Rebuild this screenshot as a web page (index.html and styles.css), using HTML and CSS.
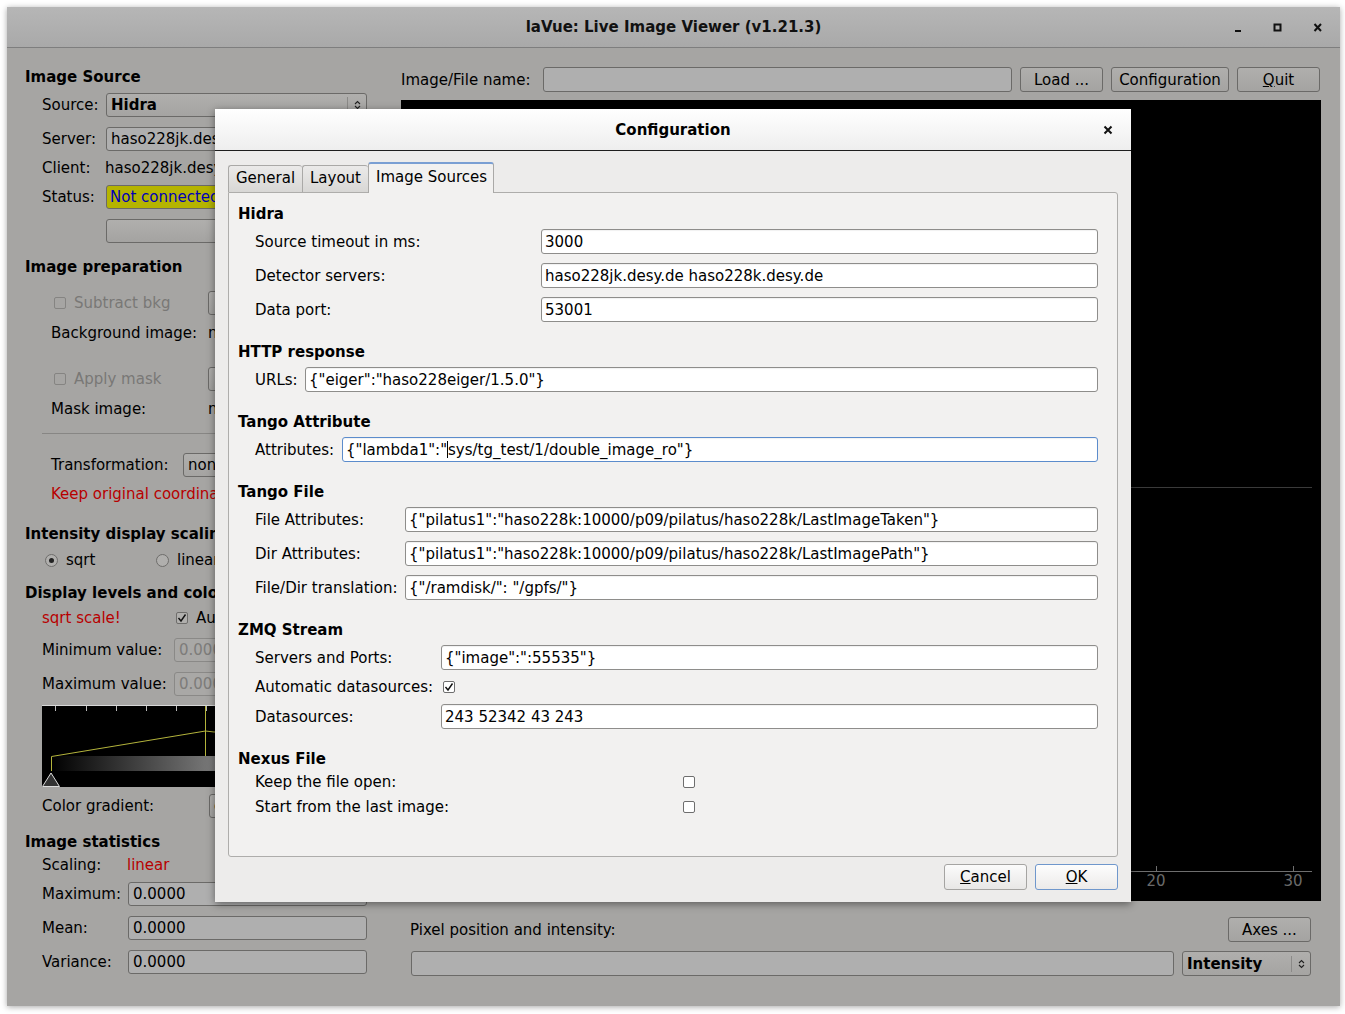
FILE: index.html
```html
<!DOCTYPE html>
<html>
<head>
<meta charset="utf-8">
<title>laVue: Live Image Viewer</title>
<link rel="stylesheet" href="styles.css">
</head>
<body>
<div class="win">
  <div class="titlebar">
    <span></span>
    <span class="wtitle">laVue: Live Image Viewer (v1.21.3)</span>
    <div class="wctl">
      <svg width="20" height="12" viewBox="0 0 20 12"><rect x="7" y="8" width="6" height="2" fill="#111"/></svg>
      <svg width="20" height="12" viewBox="0 0 20 12"><rect x="6.5" y="2.5" width="6" height="6" fill="none" stroke="#111" stroke-width="2"/></svg>
      <svg width="20" height="12" viewBox="0 0 20 12"><path d="M6.5 2 L13 9 M13 2 L6.5 9" stroke="#111" stroke-width="2" fill="none"/></svg>
    </div>
  </div>

  <div class="main">
    <div class="left">
      <div class="row head">Image Source</div>
      <div class="row ind mt4"><span class="lab w64">Source:</span><div class="combo grow"><span class="ctext b">Hidra</span><span class="arr"><svg width="7" height="10" viewBox="0 0 7 10"><path d="M1 4 L3.5 1.5 L6 4 M1 6 L3.5 8.5 L6 6" fill="none" stroke="#222" stroke-width="1.1"/></svg></span></div></div>
      <div class="row ind mt10"><span class="lab w64">Server:</span><div class="mfield grow">haso228jk.desy.de</div></div>
      <div class="row ind mt5"><span class="lab w63">Client:</span><span>haso228jk.desy.de</span></div>
      <div class="row ind mt5"><span class="lab w64">Status:</span><div class="status grow">Not connected</div></div>
      <div class="row ind mt10"><span class="lab w64"></span><div class="mbtn grow">Start</div></div>

      <div class="row head mt12">Image preparation</div>
      <div class="row ind29 mt12"><span class="cbl w154"><span class="mcb dis"></span><span class="dtext">Subtract bkg</span></span><div class="mbtn grow">Select ...</div></div>
      <div class="row ind26 mt6"><span class="lab w157">Background image:</span><span>none</span></div>
      <div class="row ind29 mt22"><span class="cbl w154"><span class="mcb dis"></span><span class="dtext">Apply mask</span></span><div class="mbtn grow">Select ...</div></div>
      <div class="row ind26 mt6"><span class="lab w157">Mask image:</span><span>none</span></div>
      <div class="sep mt12"></div>
      <div class="row ind26 mt19"><span class="lab w132">Transformation:</span><div class="combo grow"><span class="ctext">none</span><span class="arr"><svg width="7" height="10" viewBox="0 0 7 10"><path d="M1 4 L3.5 1.5 L6 4 M1 6 L3.5 8.5 L6 6" fill="none" stroke="#222" stroke-width="1.1"/></svg></span></div></div>
      <div class="row ind26 mt5 red">Keep original coordinates</div>

      <div class="row head mt16">Intensity display scaling</div>
      <div class="row ind20 mt2"><span class="rad w111"><span class="mrb on"></span>sqrt</span><span class="rad w111"><span class="mrb"></span>linear</span><span class="rad"><span class="mrb"></span>log</span></div>

      <div class="row head mt9">Display levels and colors</div>
      <div class="row ind mt1"><span class="lab w134 red">sqrt scale!</span><span class="cbl"><span class="mcb chk"><svg width="10" height="10" viewBox="0 0 10 10"><path d="M1.5 5 L4 8 L8.5 1.5" fill="none" stroke="#111" stroke-width="1.4"/></svg></span>Auto levels</span></div>
      <div class="row ind mt8"><span class="lab w132">Minimum value:</span><div class="mfield dis grow">0.0000</div></div>
      <div class="row ind mt10"><span class="lab w132">Maximum value:</span><div class="mfield dis grow">0.0000</div></div>
      <div class="hist mt9">
        <svg width="325" height="82" viewBox="0 0 325 82">
          <defs><linearGradient id="gbar" x1="0" x2="1" y1="0" y2="0"><stop offset="0" stop-color="#000"/><stop offset="1" stop-color="#e6e6e6"/></linearGradient></defs>
          <rect width="325" height="82" fill="#000"/>
          <line x1="0" y1="0.5" x2="325" y2="0.5" stroke="#d8d8d8"/>
          <path d="M13.5 1 V6 M44.5 1 V6 M74.5 1 V6 M104.5 1 V6 M134.5 1 V6 M164.5 1 V6 M194.5 1 V6 M224.5 1 V6 M254.5 1 V6 M284.5 1 V6 M314.5 1 V6" stroke="#bbb"/>
          <rect x="9" y="51" width="306" height="15" fill="url(#gbar)"/>
          <path d="M9.5 66 V51.5 L163.5 26 L172 27 L315 22" fill="none" stroke="#b4b43c"/>
          <path d="M163.5 1 V51" stroke="#b4b43c"/>
          <path d="M0.5 81.5 L9 68 L17.5 81.5 Z" fill="#333" stroke="#ddd"/>
        </svg>
      </div>
      <div class="row ind mt7"><span class="lab w167">Color gradient:</span><div class="combo grow"><span class="ctext">grey</span><span class="arr"><svg width="7" height="10" viewBox="0 0 7 10"><path d="M1 4 L3.5 1.5 L6 4 M1 6 L3.5 8.5 L6 6" fill="none" stroke="#222" stroke-width="1.1"/></svg></span></div></div>

      <div class="row head mt12">Image statistics</div>
      <div class="row ind h22"><span class="lab w85">Scaling:</span><span class="red">linear</span></div>
      <div class="row ind mt6"><span class="lab w86">Maximum:</span><div class="mfield grow">0.0000</div></div>
      <div class="row ind mt10"><span class="lab w86">Mean:</span><div class="mfield grow">0.0000</div></div>
      <div class="row ind mt10"><span class="lab w86">Variance:</span><div class="mfield grow">0.0000</div></div>
    </div>

    <div class="right">
      <div class="toprow">
        <span class="lab w142">Image/File name:</span>
        <div class="mfield w469"></div>
        <div class="mbtn w83">Load ...</div>
        <div class="mbtn w118">Configuration</div>
        <div class="mbtn w83"><u>Q</u>uit</div>
      </div>
      <div class="image">
        <svg width="920" height="801" viewBox="0 0 920 801">
          <rect width="920" height="801" fill="#000"/>
          <line x1="100" y1="387.5" x2="911" y2="387.5" stroke="#3a3a3a"/>
          <line x1="0" y1="771.5" x2="911" y2="771.5" stroke="#6e6e6e"/>
          <path d="M755.5 766 V771 M892.5 766 V771" stroke="#6e6e6e"/>
          <text x="755" y="786" class="axl" text-anchor="middle">20</text>
          <text x="892" y="786" class="axl" text-anchor="middle">30</text>
        </svg>
      </div>
      <div class="pixrow">
        <span class="grow">Pixel position and intensity:</span>
        <div class="mbtn w83">Axes ...</div>
      </div>
      <div class="pixrow2">
        <div class="mfield grow"></div>
        <div class="combo w129"><span class="ctext b">Intensity</span><span class="arr"><svg width="7" height="10" viewBox="0 0 7 10"><path d="M1 4 L3.5 1.5 L6 4 M1 6 L3.5 8.5 L6 6" fill="none" stroke="#222" stroke-width="1.1"/></svg></span></div>
      </div>
    </div>
  </div>

  <div class="dialog">
    <div class="dtitle">
      <span></span>
      <span class="dtt">Configuration</span>
      <div class="dctl"><svg width="10" height="10" viewBox="0 0 10 10"><path d="M1.5 1.5 L8.5 8.5 M8.5 1.5 L1.5 8.5" stroke="#111" stroke-width="2" fill="none"/></svg></div>
    </div>
    <div class="dbody">
      <div class="tabs">
        <div class="tab w74">General</div>
        <div class="tab w66">Layout</div>
        <div class="tab active w126">Image Sources</div>
      </div>
      <div class="pane">
        <div class="gh">Hidra</div>
        <div class="grid c286">
          <span class="gl">Source timeout in ms:</span><div class="le">3000</div>
          <span class="gl">Detector servers:</span><div class="le">haso228jk.desy.de haso228k.desy.de</div>
          <span class="gl">Data port:</span><div class="le">53001</div>
        </div>

        <div class="gh mt19">HTTP response</div>
        <div class="grid c50">
          <span class="gl">URLs:</span><div class="le">{"eiger":"haso228eiger/1.5.0"}</div>
        </div>

        <div class="gh mt19">Tango Attribute</div>
        <div class="grid c87">
          <span class="gl">Attributes:</span><div class="le focus">{"lambda1":"<span class="caret"></span>sys/tg_test/1/double_image_ro"}</div>
        </div>

        <div class="gh mt19">Tango File</div>
        <div class="grid c150">
          <span class="gl">File Attributes:</span><div class="le">{"pilatus1":"haso228k:10000/p09/pilatus/haso228k/LastImageTaken"}</div>
          <span class="gl">Dir Attributes:</span><div class="le">{"pilatus1":"haso228k:10000/p09/pilatus/haso228k/LastImagePath"}</div>
          <span class="gl">File/Dir translation:</span><div class="le">{"/ramdisk/": "/gpfs/"}</div>
        </div>

        <div class="gh mt19">ZMQ Stream</div>
        <div class="grid c186">
          <span class="gl">Servers and Ports:</span><div class="le">{"image":":55535"}</div>
          <span class="gl">Automatic datasources:</span><div class="cbcell"><span class="dcb chk"><svg width="10" height="10" viewBox="0 0 10 10"><path d="M1.5 5 L4 8 L8.5 1.5" fill="none" stroke="#111" stroke-width="1.4"/></svg></span></div>
          <span class="gl">Datasources:</span><div class="le">243 52342 43 243</div>
        </div>

        <div class="gh mt19">Nexus File</div>
        <div class="grid nx c428">
          <span class="gl">Keep the file open:</span><div class="cbcell"><span class="dcb"></span></div>
          <span class="gl">Start from the last image:</span><div class="cbcell"><span class="dcb"></span></div>
        </div>
      </div>
      <div class="btns">
        <div class="dbtn"><u>C</u>ancel</div>
        <div class="dbtn def"><u>O</u>K</div>
      </div>
    </div>
  </div>
</div>
</body>
</html>
```

FILE: styles.css
```css
* { box-sizing: border-box; }
html, body { margin: 0; padding: 0; }
body {
  width: 1345px;
  height: 1014px;
  overflow: hidden;
  background: #ffffff;
  font-family: "DejaVu Sans", "Noto Sans", sans-serif;
  font-size: 15px;
  color: #000;
}

.win {
  position: relative;
  margin: 7px 0 0 7px;
  width: 1333px;
  height: 999px;
  background: #a6a5a3;
  box-shadow: 0 1px 6px rgba(0,0,0,0.35);
}

.titlebar {
  height: 41px;
  display: grid;
  grid-template-columns: 1fr auto 1fr;
  align-items: center;
  background: linear-gradient(#b6b6b6, #a9a9a9);
  border-bottom: 1px solid #7e7e7e;
}
.wtitle { font-weight: bold; color: #111; }
.wctl {
  display: flex;
  justify-content: flex-end;
  gap: 20px;
  padding-right: 12px;
  padding-top: 2px;
}

.main {
  display: flex;
  gap: 34px;
  padding: 17px 19px 0 18px;
}
.left { width: 342px; display: flex; flex-direction: column; }
.right { width: 920px; display: flex; flex-direction: column; padding-top: 2px; }

.row { display: flex; align-items: center; height: 24px; white-space: nowrap; }
.head { font-weight: bold; }
.ind { padding-left: 17px; }
.ind20 { padding-left: 20px; }
.ind26 { padding-left: 26px; }
.ind29 { padding-left: 29px; }
.h22 { height: 22px; }
.grow { flex: 1; min-width: 0; }
.b { font-weight: bold; }
.red { color: #b80000; }

.mt1 { margin-top: 1px; }
.mt2 { margin-top: 2px; }
.mt4 { margin-top: 4px; }
.mt5 { margin-top: 5px; }
.mt6 { margin-top: 6px; }
.mt7 { margin-top: 7px; }
.mt8 { margin-top: 8px; }
.mt9 { margin-top: 9px; }
.mt10 { margin-top: 10px; }
.mt12 { margin-top: 12px; }
.mt16 { margin-top: 16px; }
.mt19 { margin-top: 19px; }
.mt22 { margin-top: 22px; }

.lab { flex: none; }
.w63 { width: 63px; flex: none; }
.w64 { width: 64px; flex: none; }
.w66 { width: 66px; flex: none; }
.w74 { width: 74px; flex: none; }
.w83 { width: 83px; flex: none; }
.w85 { width: 85px; flex: none; }
.w86 { width: 86px; flex: none; }
.w111 { width: 111px; flex: none; }
.w118 { width: 118px; flex: none; }
.w126 { width: 126px; flex: none; }
.w129 { width: 129px; flex: none; }
.w132 { width: 132px; flex: none; }
.w134 { width: 134px; flex: none; }
.w142 { width: 142px; flex: none; }
.w154 { width: 154px; flex: none; }
.w157 { width: 157px; flex: none; }
.w167 { width: 167px; flex: none; }
.w469 { width: 469px; flex: none; }

/* main window widgets (dimmed by modal) */
.mfield {
  height: 24px;
  line-height: 22px;
  padding: 0 4px;
  background: #afafaf;
  border: 1px solid #6b6a68;
  border-radius: 3px;
  white-space: nowrap;
  overflow: hidden;
}
.mfield.dis { color: #7d7c7a; background: #a9a8a6; border-color: #8a8987; }
.mbtn {
  height: 25px;
  line-height: 24px;
  text-align: center;
  background: linear-gradient(#b0afad, #a4a3a1);
  border: 1px solid #6b6a68;
  border-radius: 3px;
  white-space: nowrap;
  overflow: hidden;
}
.row .mbtn { height: 24px; line-height: 22px; }
.combo {
  height: 24px;
  display: flex;
  align-items: center;
  background: linear-gradient(#b0afad, #a5a4a2);
  border: 1px solid #6b6a68;
  border-radius: 3px;
  overflow: hidden;
}
.ctext { flex: 1; padding-left: 4px; white-space: nowrap; overflow: hidden; }
.arr {
  width: 19px;
  height: 16px;
  border-left: 1px solid #8b8a88;
  display: flex;
  align-items: center;
  justify-content: center;
  flex: none;
}
.status {
  height: 24px;
  line-height: 22px;
  padding: 0 3px;
  background: #b5b400;
  color: #0000b8;
  border: 1px solid #6b6a68;
  border-radius: 3px;
  white-space: nowrap;
  overflow: hidden;
}
.cbl, .rad { display: flex; align-items: center; }
.mcb {
  width: 12px; height: 12px;
  border: 1px solid #6e6d6b;
  border-radius: 2px;
  background: #b0afad;
  margin-right: 8px;
  display: flex; align-items: center; justify-content: center;
  flex: none;
}
.mcb.dis { background: #a6a5a3; border-color: #858482; }
.dtext { color: #797876; }
.mrb {
  width: 13px; height: 13px;
  border: 1px solid #6e6d6b;
  border-radius: 50%;
  background: #b0afad;
  margin-right: 8px;
  position: relative;
  flex: none;
}
.mrb.on::after {
  content: "";
  position: absolute;
  left: 3px; top: 3px;
  width: 5px; height: 5px;
  border-radius: 50%;
  background: #222;
}
.sep { height: 1px; background: #878684; margin-left: 17px; }
.hist { margin-left: 17px; height: 82px; }
.hist svg, .image svg { display: block; }

.toprow { display: flex; align-items: center; gap: 8px; height: 25px; }
.toprow .lab { margin-right: -8px; padding-top: 1px; }
.toprow .mfield { height: 25px; }
.image { margin-top: 8px; height: 801px; background: #000; }
.axl { font-family: "DejaVu Sans", sans-serif; font-size: 15px; fill: #6a6a6a; }
.pixrow {
  display: flex; align-items: center; height: 25px;
  margin-top: 16px; padding: 0 10px 0 9px;
}
.pixrow2 {
  display: flex; align-items: center; gap: 8px; height: 25px;
  margin-top: 9px; padding: 0 10px;
}
.pixrow2 .mfield { height: 25px; }
.pixrow2 .combo { height: 25px; }

/* dialog */
.dialog {
  position: absolute;
  left: 208px;
  top: 102px;
  width: 916px;
  height: 793px;
  background: #edeceb;
  box-shadow: 0 2px 8px rgba(0,0,0,0.45);
  display: flex;
  flex-direction: column;
}
.dtitle {
  height: 42px;
  flex: none;
  display: grid;
  grid-template-columns: 1fr auto 1fr;
  align-items: center;
  background: linear-gradient(#ffffff, #eeeeee);
  border-bottom: 1px solid #1e1e1e;
}
.dtt { font-weight: bold; }
.dctl { display: flex; justify-content: flex-end; padding-right: 18px; }
.dctl svg { display: block; }
.dbody { padding: 11px 13px 0 13px; flex: 1; display: flex; flex-direction: column; }
.tabs { display: flex; align-items: flex-end; height: 30px; position: relative; z-index: 1; }
.tab {
  height: 27px;
  line-height: 25px;
  padding-left: 7px;
  background: linear-gradient(#ebeae9, #d8d7d5);
  border: 1px solid #aaa9a7;
  border-bottom: none;
  border-right: none;
  border-radius: 3px 3px 0 0;
  white-space: nowrap;
}
.tab.active {
  height: 31px;
  line-height: 27px;
  padding-left: 7px;
  background: #f2f1f0;
  border: 1px solid #aaa9a7;
  border-top: 2px solid #7a9fd3;
  border-bottom: none;
  margin-bottom: -1px;
}
.pane {
  height: 665px;
  background: #f2f1f0;
  border: 1px solid #aeadab;
  border-radius: 0 3px 3px 3px;
  padding: 10px 19px 0 9px;
  display: flex;
  flex-direction: column;
}
.gh { height: 20px; line-height: 22px; font-weight: bold; }
.grid {
  display: grid;
  margin-top: 6px;
  padding-left: 17px;
  row-gap: 9px;
  align-items: center;
}
.c50 { grid-template-columns: 50px 1fr; }
.c87 { grid-template-columns: 87px 1fr; }
.c150 { grid-template-columns: 150px 1fr; }
.c186 { grid-template-columns: 186px 1fr; }
.c286 { grid-template-columns: 286px 1fr; }
.c428 { grid-template-columns: 428px 1fr; }
.gl { line-height: 16px; white-space: nowrap; }
.grid.nx { margin-top: 4px; row-gap: 5px; }
.grid.nx .gl { line-height: 20px; }
.le {
  height: 25px;
  line-height: 24px;
  padding: 0 3px;
  background: #fff;
  border: 1px solid #8e8d8b;
  border-radius: 3px;
  white-space: nowrap;
  overflow: hidden;
  box-shadow: inset 0 1px 1px rgba(0,0,0,0.06);
}
.le.focus { border-color: #5c8ccc; }
.caret { display: inline-block; width: 1px; height: 17px; background: #000; vertical-align: -3px; }
.cbcell { display: flex; align-items: center; height: 16px; }
.grid .cbcell { padding-left: 2px; }
.grid.nx .cbcell { padding-left: 0; height: 20px; }
.dcb {
  width: 12px; height: 12px;
  border: 1px solid #6e6e6e;
  border-radius: 2px;
  background: #fff;
  display: flex; align-items: center; justify-content: center;
}
.btns { display: flex; justify-content: flex-end; gap: 8px; margin-top: 7px; }
.dbtn {
  width: 83px;
  height: 26px;
  line-height: 24px;
  text-align: center;
  background: linear-gradient(#fbfbfb, #e8e7e6);
  border: 1px solid #a5a4a2;
  border-radius: 3px;
}
.dbtn.def { border-color: #6f97cc; background: linear-gradient(#fdfdfd, #eceae9); }
```
